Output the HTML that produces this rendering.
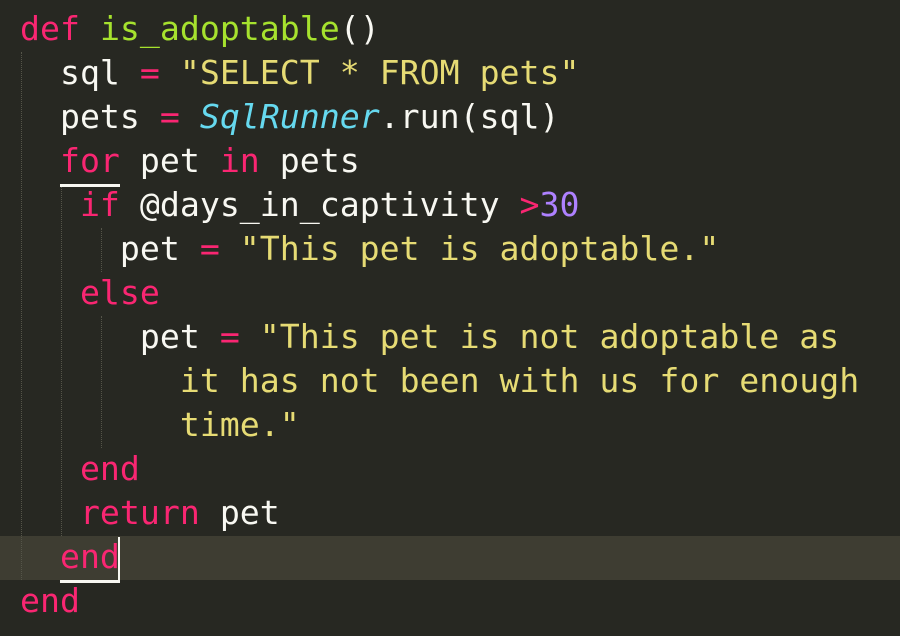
<!DOCTYPE html>
<html><head><style>
body{margin:0;width:900px;height:636px;background:#272822;overflow:hidden;position:relative}
pre{margin:0;position:absolute;left:20px;top:7px;font-family:"DejaVu Sans Mono","Liberation Mono",monospace;font-size:33.2px;line-height:44px;color:#f8f8f2}
.k{color:#f92672}.s{color:#e6db74}.f{color:#a6e22e}.c{color:#66d9ef;font-style:italic}.n{color:#ae81ff}
.g{position:absolute;width:0;border-left:1px dotted #555549}
.hl{position:absolute;left:0;top:536px;width:900px;height:44px;background:#3e3d32}
.u{position:absolute;background:#f8f8f2}
</style></head><body>
<div class="hl"></div>
<div class="g" style="left:21px;top:52px;height:528px"></div>
<div class="g" style="left:61px;top:184px;height:352px"></div>
<div class="g" style="left:101px;top:228px;height:44px"></div>
<div class="g" style="left:101px;top:316px;height:132px"></div>
<div class="u" style="left:60px;top:184px;width:60px;height:3px"></div>
<div class="u" style="left:60px;top:580px;width:60px;height:3px"></div>
<div class="u" style="left:118px;top:537px;width:2px;height:46px"></div>
<pre><span class="k">def</span> <span class="f">is_adoptable</span>()
  sql <span class="k">=</span> <span class="s">"SELECT * FROM pets"</span>
  pets <span class="k">=</span> <span class="c">SqlRunner</span>.run(sql)
  <span class="k">for</span> pet <span class="k">in</span> pets
   <span class="k">if</span> @days_in_captivity <span class="k">&gt;</span><span class="n">30</span>
     pet <span class="k">=</span> <span class="s">"This pet is adoptable."</span>
   <span class="k">else</span>
      pet <span class="k">=</span> <span class="s">"This pet is not adoptable as</span>
<span class="s">        it has not been with us for enough</span>
<span class="s">        time."</span>
   <span class="k">end</span>
   <span class="k">return</span> pet
  <span class="k">end</span>
<span class="k">end</span></pre>
</body></html>
